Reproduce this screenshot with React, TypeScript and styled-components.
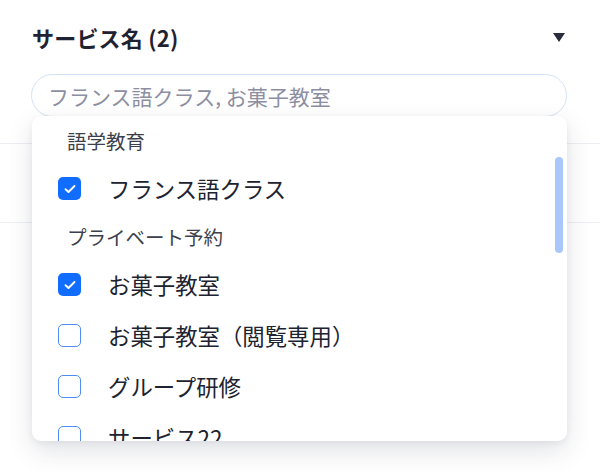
import React from "react";
import styled, { createGlobalStyle } from "styled-components";

const GlobalStyle = createGlobalStyle`
  html, body { margin: 0; padding: 0; background: #ffffff; }
  body {
    font-family: "Noto Sans CJK JP", "Noto Sans", sans-serif;
    color: #20232f;
    width: 600px;
    height: 472px;
    overflow: hidden;
  }
`;

const Page = styled.div`
  display: flex;
  flex-direction: column;
  padding: 24px 0 0;
`;

const TitleRow = styled.div`
  display: flex;
  align-items: center;
  justify-content: space-between;
  padding: 0 35px 0 32px;
  height: 26px;
`;

const Title = styled.h2`
  margin: 0;
  font-size: 22px;
  font-weight: 700;
  line-height: 26px;
  color: #1f2230;
  letter-spacing: 0.2px;
`;

const Caret = styled.svg`
  width: 12px;
  height: 9px;
  display: block;
`;

const SearchWrap = styled.div`
  position: relative;
  margin: 24px 33px 0 31px;
`;

const SearchInput = styled.input`
  box-sizing: border-box;
  width: 100%;
  height: 43px;
  border: 1px solid #d3e2f6;
  border-radius: 22px;
  padding: 0 16px;
  font-family: inherit;
  font-size: 21px;
  background: #fff;
  outline: none;
  &::placeholder { color: #8c8fa1; }
`;

const Underlay = styled.div`
  display: flex;
  flex-direction: column;
`;

const UnderRow = styled.div<{ $h: number }>`
  height: ${(p) => p.$h}px;
  border-bottom: 1px solid #eceef2;
`;

const Panel = styled.div`
  position: absolute;
  top: 42px;
  left: 1px;
  right: 0;
  height: 325px;
  background: #fff;
  border-radius: 9px;
  box-shadow: 0 10px 26px rgba(30, 40, 70, 0.13), 0 2px 6px rgba(30, 40, 70, 0.06);
  overflow: hidden;
  z-index: 5;
`;

const List = styled.ul`
  list-style: none;
  margin: 0;
  padding: 2px 0 0;
`;

const GroupHeader = styled.li`
  height: 45px;
  display: flex;
  align-items: center;
  padding-left: 35px;
  font-size: 19.5px;
  color: #3c3f4c;
  line-height: 1;
`;

const Option = styled.li`
  height: 51px;
  display: flex;
  align-items: center;
  gap: 27px;
  padding-left: 26px;
  font-size: 22.4px;
  color: #20232f;
  line-height: 1;
`;

const Box = styled.span<{ $checked: boolean }>`
  box-sizing: border-box;
  flex: none;
  width: 23px;
  height: 23px;
  border-radius: 5px;
  display: flex;
  align-items: center;
  justify-content: center;
  background: ${(p) => (p.$checked ? "#116dff" : "#ffffff")};
  border: ${(p) => (p.$checked ? "none" : "1.5px solid #4e8ef3")};
`;

const Thumb = styled.div`
  position: absolute;
  top: 41px;
  right: 4px;
  width: 8px;
  height: 96px;
  border-radius: 4px;
  background: #a8c7fd;
`;

type Entry = { kind: "header"; label: string } | { kind: "option"; label: string; checked: boolean };

const entries: Entry[] = [
  { kind: "header", label: "語学教育" },
  { kind: "option", label: "フランス語クラス", checked: true },
  { kind: "header", label: "プライベート予約" },
  { kind: "option", label: "お菓子教室", checked: true },
  { kind: "option", label: "お菓子教室（閲覧専用）", checked: false },
  { kind: "option", label: "グループ研修", checked: false },
  { kind: "option", label: "サービス22", checked: false },
];

const Check = () => (
  <svg width="12" height="10" viewBox="0 0 12 10">
    <path d="M1.5 5.2 L4.5 8 L10.5 2" fill="none" stroke="#fff" strokeWidth="1.9" strokeLinecap="round" strokeLinejoin="round" />
  </svg>
);

export default function App() {
  return (
    <>
      <GlobalStyle />
      <Page>
        <TitleRow>
          <Title>サービス名 (2)</Title>
          <Caret viewBox="0 0 12 9">
            <path d="M0 0 H12 L6 9 Z" fill="#2a2d3c" />
          </Caret>
        </TitleRow>
        <SearchWrap>
          <SearchInput placeholder="フランス語クラス, お菓子教室" readOnly />
          <Panel>
            <List>
              {entries.map((e, i) =>
                e.kind === "header" ? (
                  <GroupHeader key={i}>{e.label}</GroupHeader>
                ) : (
                  <Option key={i}>
                    <Box $checked={e.checked}>{e.checked && <Check />}</Box>
                    {e.label}
                  </Option>
                )
              )}
            </List>
            <Thumb />
          </Panel>
        </SearchWrap>
        <Underlay>
          <UnderRow $h={26} />
          <UnderRow $h={78} />
        </Underlay>
      </Page>
    </>
  );
}
